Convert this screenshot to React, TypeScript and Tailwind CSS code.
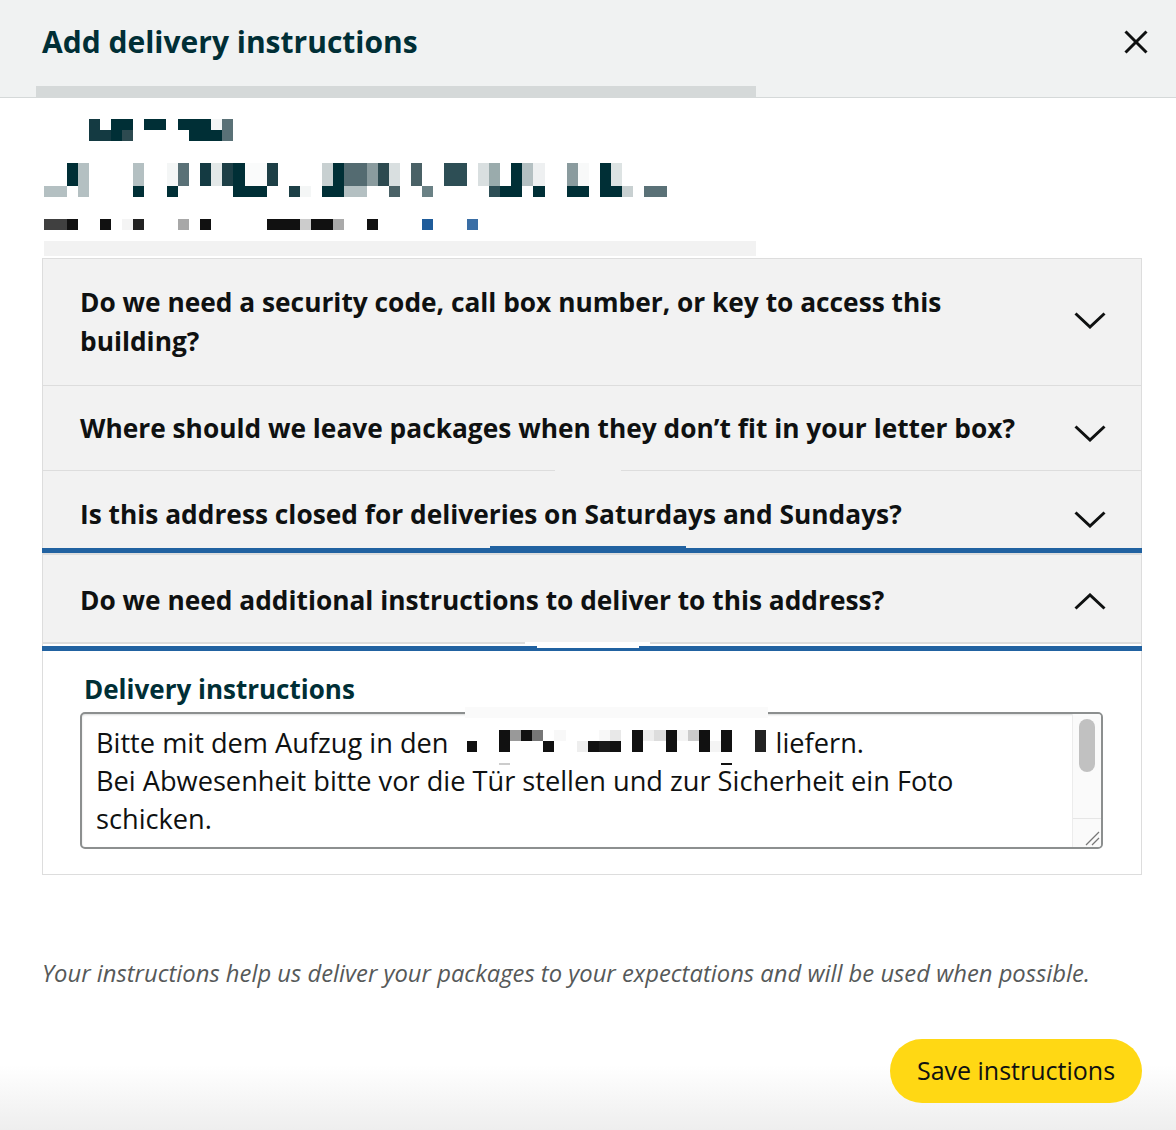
import React from "react";

type R = [number, number, number, number, string];

const addr: R[] = [
  // row 1
  [89, 100, 119, 130, "#143a42"],
  [111, 133, 119, 130, "#002f36"],
  [144, 166, 119, 130, "#002f36"],
  [178, 211, 119, 130, "#002f36"],
  [211, 222, 119, 130, "#f4f6f6"],
  [222, 233, 119, 141, "#5a7177"],
  [89, 111, 130, 141, "#143a42"],
  [111, 122, 130, 141, "#002f36"],
  [122, 133, 130, 141, "#2d4a50"],
  [189, 222, 130, 141, "#002f36"],
  // row 2 top
  [67, 78, 163, 186, "#002f36"],
  [78, 89, 163, 197, "#b4c0c2"],
  [133, 144, 163, 186, "#b4c0c2"],
  [167, 178, 163, 186, "#f4f6f6"],
  [178, 189, 163, 186, "#5a7177"],
  [200, 211, 163, 186, "#143a42"],
  [211, 222, 163, 186, "#e3e8e8"],
  [222, 233, 163, 186, "#1d3f46"],
  [233, 245, 163, 186, "#002f36"],
  [245, 267, 163, 186, "#fafbfb"],
  [267, 278, 163, 186, "#1d3f46"],
  [322, 333, 163, 186, "#c8d0d1"],
  [333, 344, 163, 186, "#002f36"],
  [344, 367, 163, 186, "#546b71"],
  [367, 378, 163, 186, "#8a9b9e"],
  [378, 389, 163, 186, "#2d4a50"],
  [389, 400, 163, 186, "#d9dfe0"],
  [411, 422, 163, 186, "#4a6166"],
  [444, 467, 163, 186, "#2d4e55"],
  [478, 489, 163, 186, "#d9dfe0"],
  [489, 500, 163, 186, "#9aabac"],
  [511, 522, 163, 186, "#002f36"],
  [522, 533, 163, 186, "#b4c0c2"],
  [533, 545, 163, 186, "#eef0f1"],
  [567, 578, 163, 186, "#8a9b9e"],
  [578, 589, 163, 186, "#f8f9f9"],
  [600, 611, 163, 186, "#002f36"],
  [611, 622, 163, 186, "#dde3e3"],
  // row 2 bottom
  [44, 67, 186, 197, "#b4c0c2"],
  [133, 144, 186, 197, "#002f36"],
  [167, 178, 186, 197, "#002f36"],
  [233, 267, 186, 197, "#002f36"],
  [289, 300, 186, 197, "#1d3f46"],
  [300, 311, 186, 197, "#f4f6f6"],
  [322, 344, 186, 197, "#002f36"],
  [344, 367, 186, 197, "#b4c0c2"],
  [389, 400, 186, 197, "#4a6166"],
  [422, 433, 186, 197, "#6a8185"],
  [489, 500, 186, 197, "#2d4e55"],
  [500, 522, 186, 197, "#002f36"],
  [533, 545, 186, 197, "#002f36"],
  [567, 589, 186, 197, "#002f36"],
  [600, 622, 186, 197, "#002f36"],
  [622, 633, 186, 197, "#c8d0d1"],
  [644, 667, 186, 197, "#5a7177"],
  // row 3
  [44, 67, 219, 230, "#404040"],
  [67, 78, 219, 230, "#111111"],
  [100, 111, 219, 230, "#111111"],
  [122, 133, 219, 230, "#f4f4f4"],
  [133, 144, 219, 230, "#222222"],
  [178, 189, 219, 230, "#a8a8a8"],
  [200, 211, 219, 230, "#111111"],
  [267, 300, 219, 230, "#111111"],
  [300, 311, 219, 230, "#cccccc"],
  [311, 333, 219, 230, "#111111"],
  [333, 344, 219, 230, "#aaaaaa"],
  [367, 378, 219, 230, "#111111"],
  [422, 433, 219, 230, "#1f5c9a"],
  [467, 478, 219, 230, "#3a6ea5"],
  // light band
  [44, 756, 241, 256, "#f2f2f2"],
];

const note: R[] = [
  [466, 769, 707, 718, "#fafafa"],
  [468, 478, 741, 752, "#111111"],
  [500, 511, 730, 752, "#111111"],
  [511, 522, 730, 741, "#999999"],
  [522, 533, 730, 741, "#111111"],
  [533, 544, 730, 741, "#777777"],
  [544, 555, 741, 752, "#111111"],
  [555, 567, 730, 741, "#f8f8f8"],
  [578, 589, 741, 752, "#eeeeee"],
  [589, 600, 741, 752, "#111111"],
  [600, 611, 730, 741, "#f8f8f8"],
  [600, 611, 741, 752, "#1a1a1a"],
  [611, 622, 730, 741, "#e8e8e8"],
  [611, 622, 741, 752, "#111111"],
  [633, 644, 730, 752, "#111111"],
  [644, 655, 730, 741, "#eeeeee"],
  [655, 667, 730, 741, "#dddddd"],
  [667, 678, 730, 752, "#111111"],
  [678, 689, 730, 741, "#f4f4f4"],
  [689, 700, 730, 741, "#cccccc"],
  [700, 711, 730, 752, "#111111"],
  [711, 722, 741, 752, "#f4f4f4"],
  [722, 733, 730, 752, "#111111"],
  [756, 767, 730, 752, "#222222"],
  [500, 511, 763, 765, "#cccccc"],
  [722, 733, 763, 765, "#111111"],
];

function Rects({ list }: { list: R[] }) {
  return (
    <>
      {list.map(([x1, x2, y1, y2, c], i) => (
        <rect key={i} x={x1} y={y1} width={x2 - x1} height={y2 - y1} fill={c} />
      ))}
    </>
  );
}

function Chevron({ up }: { up?: boolean }) {
  return (
    <svg width="32" height="17" viewBox="0 0 32 17" fill="none" stroke="#0f1111" strokeWidth="3">
      {up ? <polyline points="1.5,15.5 16,2 30.5,15.5" /> : <polyline points="1.5,1.5 16,15 30.5,1.5" />}
    </svg>
  );
}

export default function App() {
  return (
    <div className="relative w-[1176px] h-[1130px] overflow-hidden bg-[linear-gradient(to_bottom,#ffffff_0px,#ffffff_1065px,#eeeeee_1130px)] font-['Open_Sans',sans-serif] text-[#0f1111]">
      <header className="h-[98px] bg-[#f0f2f2] border-b border-[#d5d9d9] flex items-center justify-between pl-[42px] pr-[28px] pb-[14px]">
        <h1 className="text-[30px] font-bold leading-[36px] text-[#002f36]">Add delivery instructions</h1>
        <svg width="24" height="24" viewBox="0 0 24 24" fill="none" stroke="#0f1111" strokeWidth="3">
          <line x1="1.5" y1="1.5" x2="22.5" y2="22.5" />
          <line x1="22.5" y1="1.5" x2="1.5" y2="22.5" />
        </svg>
      </header>
      <div className="absolute left-[36px] top-[86px] w-[720px] h-[11px] bg-[#d5d9d9]" />

      <svg width="1176" height="160" viewBox="0 98 1176 160" className="block">
        <Rects list={addr} />
      </svg>

      <div className="relative ml-[42px] w-[1100px] border-t border-x border-[#dddddd]">
        <div className="h-[127px] bg-[#f2f2f2] border-b border-[#dddddd] flex justify-between pl-[37px] pr-[35px]">
          <div className="pt-[24px] text-[26.3px] leading-[39px] font-bold whitespace-nowrap">
            Do we need a security code, call box number, or key to access this
            <br />
            building?
          </div>
          <div className="mt-[53px]"><Chevron /></div>
        </div>
        <div className="h-[85px] bg-[#f2f2f2] border-b border-[#dddddd] flex justify-between pl-[37px] pr-[35px]">
          <div className="pt-[23px] text-[26.3px] leading-[39px] font-bold whitespace-nowrap">
            Where should we leave packages when they don’t fit in your letter box?
          </div>
          <div className="mt-[39px]"><Chevron /></div>
        </div>
        <div className="h-[77px] bg-[#f2f2f2] flex justify-between pl-[37px] pr-[35px]">
          <div className="pt-[24px] text-[26.3px] leading-[39px] font-bold whitespace-nowrap">
            Is this address closed for deliveries on Saturdays and Sundays?
          </div>
          <div className="mt-[40px]"><Chevron /></div>
        </div>
        <div className="-mx-px h-[5px] bg-[#2162a1]" />
        <div className="h-[91px] bg-[#f2f2f2] border-y-2 border-[#dddddd] flex justify-between pl-[37px] pr-[35px]">
          <div className="pt-[26px] text-[26.3px] leading-[39px] font-bold whitespace-nowrap">
            Do we need additional instructions to deliver to this address?
          </div>
          <div className="mt-[38px]"><Chevron up /></div>
        </div>
        <div className="-mx-px mt-[2px] h-[5px] bg-[#2162a1]" />
        <div className="bg-white border-b border-[#dddddd] pt-[22px] pb-[25px] pl-[41px]">
          <div className="text-[26px] leading-[32px] font-bold text-[#002f36]">Delivery instructions</div>
          <div className="relative mt-[7px] -ml-[4px] w-[1023px] h-[137px] border-2 border-[#8c8f8f] rounded-[5px] bg-white shadow-[inset_0_1px_2px_rgba(15,17,17,0.15)]">
            <div className="pl-[14px] pt-[10px] text-[27.2px] leading-[38px] whitespace-nowrap">
              <div>
                Bitte mit dem Aufzug in den{" "}
                <svg width="304" height="38" viewBox="466 724 304 38" overflow="visible" className="inline-block align-top overflow-visible ml-[9px]">
                  <Rects list={note} />
                </svg>{" "}
                liefern.
              </div>
              <div>Bei Abwesenheit bitte vor die Tür stellen und zur Sicherheit ein Foto</div>
              <div>schicken.</div>
            </div>
            <div className="absolute right-0 top-0 bottom-0 w-[29px] bg-[#fafafa] border-l border-[#ececec] rounded-r-[3px]">
              <div className="absolute left-[6px] top-[5px] w-[16px] h-[53px] rounded-full bg-[#c1c1c1]" />
              <div className="absolute left-0 right-0 bottom-0 h-[29px] border-t border-[#e6e6e6]">
                <svg width="28" height="28" viewBox="0 0 28 28" className="absolute right-0 bottom-0" stroke="#777" strokeWidth="1.2">
                  <line x1="13" y1="26" x2="26" y2="13" />
                  <line x1="19" y1="26" x2="26" y2="19" />
                </svg>
              </div>
            </div>
          </div>
        </div>

        {/* redaction artifacts */}
        <div className="absolute left-[512px] top-[211px] w-[66px] h-px bg-[#f2f2f2]" />
        <div className="absolute left-[447px] top-[287px] w-[196px] h-[2px] bg-[#2162a1]" />
        <div className="absolute left-[482px] top-[383px] w-[125px] h-[2px] bg-white" />
        <div className="absolute left-[494px] top-[387px] w-[102px] h-[2px] bg-white" />
      </div>

      <p className="mt-[82px] ml-[42px] text-[23.8px] leading-[32px] italic text-[#565959] whitespace-nowrap">
        Your instructions help us deliver your packages to your expectations and will be used when possible.
      </p>
      <div className="mt-[50px] flex justify-end pr-[34px]">
        <button className="w-[252px] h-[64px] rounded-full bg-[#ffd814] text-[25px] text-[#0f1111]">Save instructions</button>
      </div>
    </div>
  );
}
